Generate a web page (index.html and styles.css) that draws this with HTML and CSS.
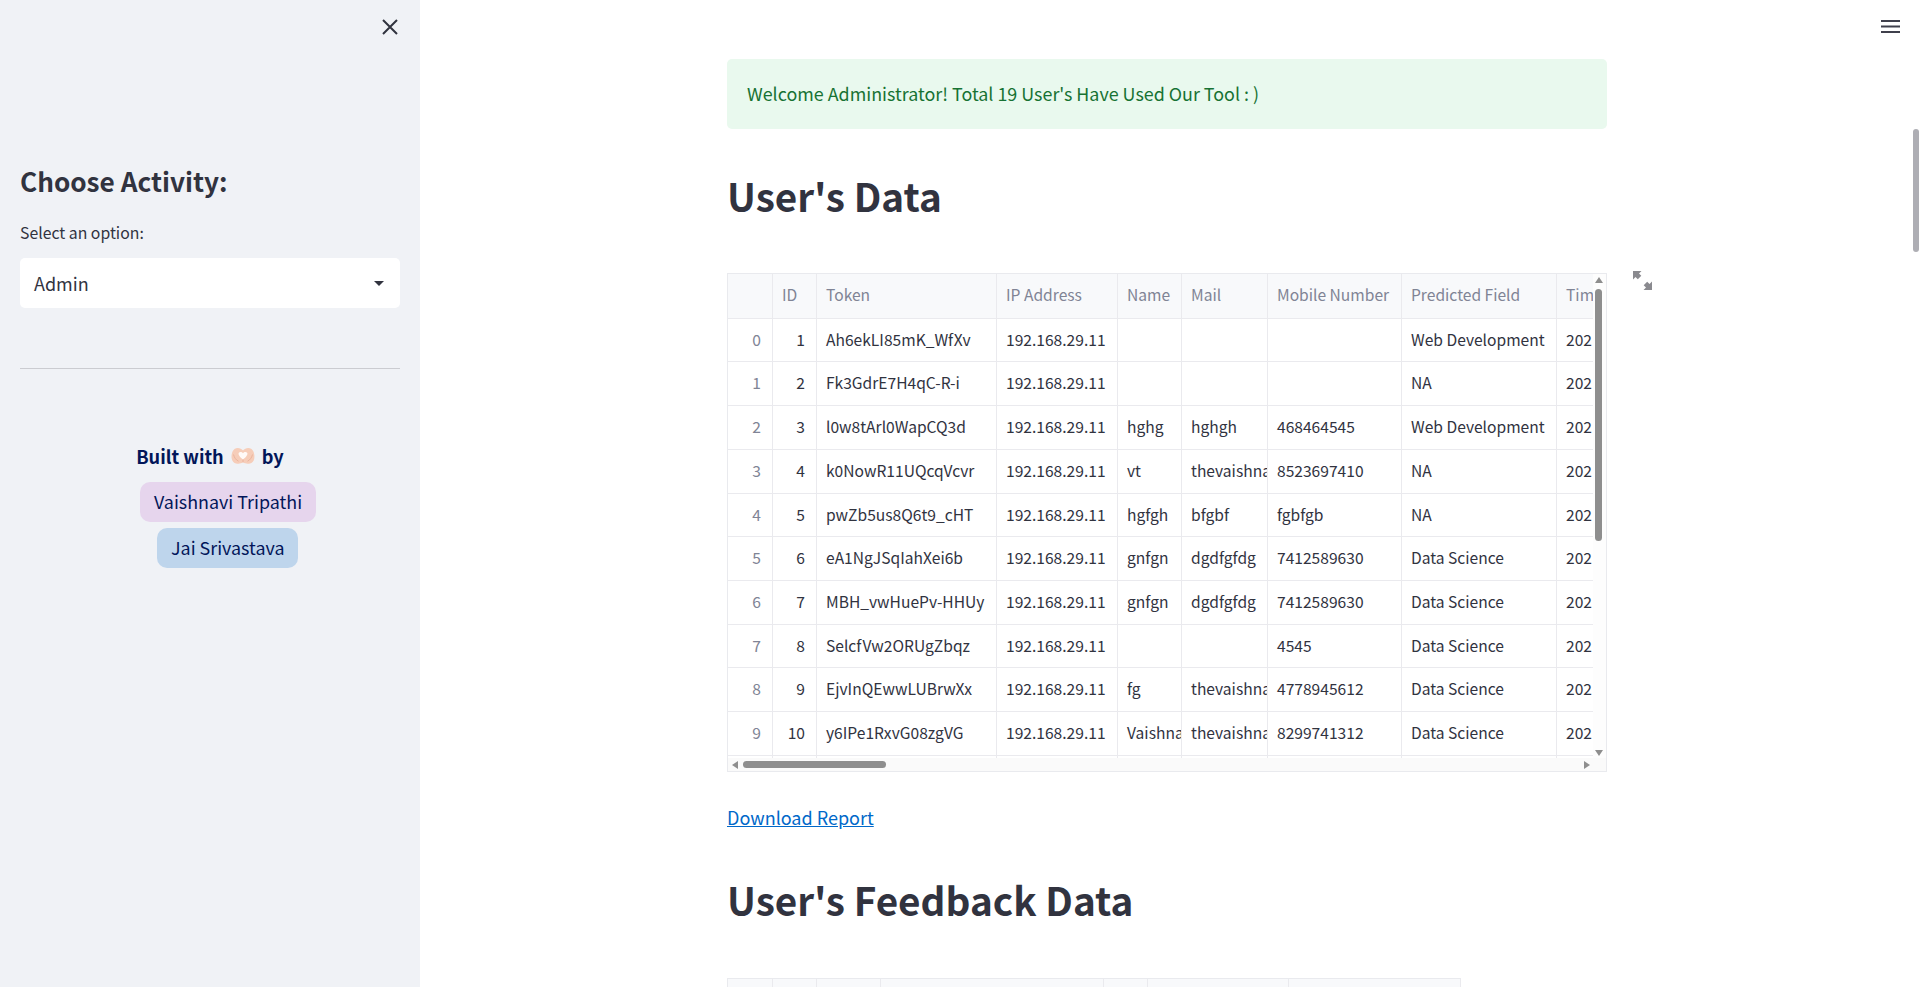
FILE: index.html
```html
<!DOCTYPE html>
<html lang="en">
<head>
  <meta charset="UTF-8">
  <title>Admin - User's Data</title>
  <link rel="stylesheet" href="styles.css">
</head>
<body>
  <div class="app">
    <aside class="sidebar">
      <button class="close-btn" type="button" aria-label="Close sidebar">
        <svg width="16" height="16" viewBox="0 0 16 16"><path d="M1 1l14 14M15 1L1 15" stroke="#31333f" stroke-width="2" fill="none"/></svg>
      </button>
      <h3 class="side-title">Choose Activity:</h3>
      <label class="side-label">Select an option:</label>
      <div class="select-box">
        <span>Admin</span>
        <span class="caret"></span>
      </div>
      <hr class="side-rule">
      <div class="credits">
        <p class="built">Built with
          <svg class="heart-hands" width="24" height="18" viewBox="0 0 24 18">
            <path d="M12 3.500C10 .8 6 .2 3.500 2 .8 4.200 .1 9 .8 12c.6 2.500 2.200 4 4.200 4.500 2.500.5 5 .3 7-1.200 2 1.500 4.500 1.700 7 1.200 2-.5 3.600-2 4.200-4.500.7-3 0-7.800-2.700-10C18 .2 14 .8 12 3.500z" fill="#f6cdb9"/>
            <path d="M12 6.300C13 4.700 15.400 4.500 16.300 6 17.200 7.800 14.300 10.700 12 12.500 9.700 10.700 6.800 7.800 7.700 6 8.600 4.500 11 4.700 12 6.300z" fill="#fffaf8"/>
            <path d="M12 12.500V15.300M2.500 7.500c.8 3.300 2.500 5.500 5 6.700M21.500 7.500c-.8 3.300-2.500 5.500-5 6.700" stroke="#e5a88f" stroke-width=".7" fill="none"/>
          </svg>
          by</p>
        <a class="pill pill-purple">Vaishnavi Tripathi</a>
        <a class="pill pill-blue">Jai Srivastava</a>
      </div>
    </aside>

    <main class="main">
      <button class="menu-btn" type="button" aria-label="Menu">
        <svg width="19" height="13" viewBox="0 0 19 13"><path d="M0 1h19M0 6.500h19M0 12h19" stroke="#3f404c" stroke-width="2" fill="none"/></svg>
      </button>
      <div class="page-thumb"></div>

      <div class="content">
        <div class="alert">Welcome Administrator! Total 19 User's Have Used Our Tool : )</div>

        <h1>User's Data</h1>
        <div class="frame frame-users">
          <div class="viewport">
            <table class="grid users">
              <thead>
                <tr><th></th><th>ID</th><th>Token</th><th>IP Address</th><th>Name</th><th>Mail</th><th>Mobile Number</th><th>Predicted Field</th><th>Timestamp</th></tr>
              </thead>
              <tbody>
                <tr><td class="idx">0</td><td class="num">1</td><td>Ah6ekLI85mK_WfXv</td><td>192.168.29.11</td><td></td><td></td><td></td><td>Web Development</td><td>202</td></tr>
                <tr><td class="idx">1</td><td class="num">2</td><td>Fk3GdrE7H4qC-R-i</td><td>192.168.29.11</td><td></td><td></td><td></td><td>NA</td><td>202</td></tr>
                <tr><td class="idx">2</td><td class="num">3</td><td>l0w8tArl0WapCQ3d</td><td>192.168.29.11</td><td>hghg</td><td>hghgh</td><td>468464545</td><td>Web Development</td><td>202</td></tr>
                <tr><td class="idx">3</td><td class="num">4</td><td>k0NowR11UQcqVcvr</td><td>192.168.29.11</td><td>vt</td><td>thevaishnavi</td><td>8523697410</td><td>NA</td><td>202</td></tr>
                <tr><td class="idx">4</td><td class="num">5</td><td>pwZb5us8Q6t9_cHT</td><td>192.168.29.11</td><td>hgfgh</td><td>bfgbf</td><td>fgbfgb</td><td>NA</td><td>202</td></tr>
                <tr><td class="idx">5</td><td class="num">6</td><td>eA1NgJSqIahXei6b</td><td>192.168.29.11</td><td>gnfgn</td><td>dgdfgfdg</td><td>7412589630</td><td>Data Science</td><td>202</td></tr>
                <tr><td class="idx">6</td><td class="num">7</td><td>MBH_vwHuePv-HHUy</td><td>192.168.29.11</td><td>gnfgn</td><td>dgdfgfdg</td><td>7412589630</td><td>Data Science</td><td>202</td></tr>
                <tr><td class="idx">7</td><td class="num">8</td><td>SelcfVw2ORUgZbqz</td><td>192.168.29.11</td><td></td><td></td><td>4545</td><td>Data Science</td><td>202</td></tr>
                <tr><td class="idx">8</td><td class="num">9</td><td>EjvInQEwwLUBrwXx</td><td>192.168.29.11</td><td>fg</td><td>thevaishnavi</td><td>4778945612</td><td>Data Science</td><td>202</td></tr>
                <tr><td class="idx">9</td><td class="num">10</td><td>y6IPe1RxvG08zgVG</td><td>192.168.29.11</td><td>Vaishnavi</td><td>thevaishnavi</td><td>8299741312</td><td>Data Science</td><td>202</td></tr>
                <tr><td></td><td></td><td></td><td></td><td></td><td></td><td></td><td></td><td></td></tr>
              </tbody>
            </table>
          </div>
          <!-- scrollbars -->
          <div class="vbar">
            <span class="arrow arrow-up"></span>
            <span class="vthumb"></span>
            <span class="arrow arrow-down"></span>
          </div>
          <div class="hbar">
            <span class="arrow arrow-left"></span>
            <span class="hthumb"></span>
            <span class="arrow arrow-right"></span>
          </div>
          <button class="expand-btn" type="button" aria-label="View fullscreen">
            <svg width="19" height="19" viewBox="0 0 19 19" fill="#8a8a8f">
              <path d="M0 0h8.500L6 2.500 8.300 4.800 4.800 8.300 2.500 6 0 8.500z"/>
              <path d="M19 19h-8.500l2.500-2.500-2.300-2.300 3.500-3.500 2.300 2.300 2.500-2.500z"/>
            </svg>
          </button>
        </div>

        <a class="report-link" href="#">Download Report</a>

        <h1>User's Feedback Data</h1>
        <div class="frame frame-feedback">
          <table class="grid feedback">
            <thead>
              <tr><th></th><th></th><th></th><th></th><th></th><th></th><th></th></tr>
            </thead>
          </table>
        </div>
      </div>
    </main>
  </div>
</body>
</html>
```

FILE: styles.css
```css
* { box-sizing: border-box; }
html, body { margin: 0; height: 100%; overflow: hidden; }
body { font-family: "Noto Sans CJK SC", "Noto Sans", sans-serif; color: #31333f; background: #fff; }
button { background: none; border: none; padding: 0; cursor: pointer; }

.app { display: flex; height: 100vh; }

/* sidebar */
.sidebar { position: relative; flex: 0 0 420px; background: #f0f2f6; padding: 164px 20px 0; }
.close-btn { position: absolute; top: 19px; left: 382px; width: 16px; height: 16px; }
.close-btn svg { display: block; }
.side-title { margin: 0; font-size: 26.200px; line-height: 34px; font-weight: 600; }
.side-label { display: block; margin-top: 23px; font-size: 15.800px; line-height: 24px; }
.select-box { display: flex; align-items: center; justify-content: space-between; height: 50px; margin-top: 13px; padding: 0 16px 0 14px; background: #fff; border-radius: 5px; font-size: 18px; }
.caret { width: 0; height: 0; border-left: 5.500px solid transparent; border-right: 5.500px solid transparent; border-top: 5px solid #31333f; }
.side-rule { margin: 60px 0 0; border: none; border-top: 1px solid #cbccd1; }
.credits { margin-top: 72px; text-align: center; color: #021659; }
.built { display: flex; justify-content: center; align-items: center; gap: 7px; margin: 0; font-size: 18.200px; line-height: 30px; font-weight: 600; }
.pill { display: block; width: fit-content; height: 40px; line-height: 39px; margin: 11px 0 0 120px; padding: 0 14px; border-radius: 10px; font-size: 17.900px; }
.pill + .pill { margin: 6px 0 0 137px; }
.pill-purple { background: #e6d5ed; }
.pill-blue { background: #bed5ec; }

/* main area */
.main { position: relative; flex: 1; padding: 59px 0 0 307px; overflow: hidden; }
.menu-btn { position: absolute; top: 20px; right: 19px; width: 19px; height: 13px; }
.menu-btn svg { display: block; }
.page-thumb { position: absolute; top: 129px; right: 0; width: 6px; height: 123px; background: #aeaeb4; border-radius: 3px; }
.content { width: 880px; }
.alert { height: 70px; padding: 0 20px; background: #e9f9ee; color: #177233; border-radius: 5px; font-size: 17.900px; line-height: 69px; }
h1 { margin: 0; font-size: 38.700px; line-height: 60px; font-weight: 600; }
.alert + h1 { margin-top: 36px; margin-bottom: 48px; }
.report-link + h1 { margin-top: 38px; margin-bottom: 49px; }

/* dataframes */
.frame { position: relative; border: 1px solid #e9eaee; background: #fff; }
.frame-users { height: 499px; }
.frame-feedback { width: 734px; }
.viewport { width: 865px; height: 484px; overflow: hidden; }
.grid { display: block; border-collapse: collapse; font-size: 15.600px; }
.grid thead, .grid tbody { display: block; }
.grid tr { display: grid; height: 43.700px; border-bottom: 1px solid #eaeaee; }
.grid thead tr { height: 44.800px; background: #f8f9fb; }
.users tr { grid-template-columns: 45px 44px 180px 121px 64px 86px 134px 155px 100px; }
.feedback tr { grid-template-columns: 45px 44px 64px 223px 44px 141px 172px; }
.grid th, .grid td { padding: 0 9px; font-weight: 400; text-align: left; white-space: nowrap; overflow: hidden; border-right: 1px solid #eaeaee; line-height: 40px; }
.grid th { color: #808495; line-height: 41px; }
.grid .idx, .grid .num { text-align: right; padding-right: 11px; }
.grid .idx { color: #808495; }
.users th:last-child, .users td:last-child { border-right: none; }

/* fake scrollbars */
.vbar { position: absolute; top: 0; right: 0; bottom: 13px; width: 13px; background: #fdfdfd; }
.vthumb { position: absolute; top: 15px; left: 2px; width: 7px; height: 252px; background: #8e8e8e; border-radius: 4px; }
.hbar { position: absolute; left: 0; right: 0; bottom: 0; height: 13px; background: #fafafa; }
.hthumb { position: absolute; top: 3px; left: 15px; width: 143px; height: 7px; background: #8e8e8e; border-radius: 4px; }
.arrow { position: absolute; width: 0; height: 0; border: 4px solid transparent; }
.arrow-up { top: 3px; left: 2px; border-bottom: 6px solid #8e8e8e; border-top: none; }
.arrow-down { bottom: 2px; left: 2px; border-top: 6px solid #8e8e8e; border-bottom: none; }
.arrow-left { top: 3px; left: 4px; border-right: 6px solid #8e8e8e; border-left: none; }
.arrow-right { top: 3px; right: 16px; border-left: 6px solid #8e8e8e; border-right: none; }
.expand-btn { position: absolute; top: -3px; left: 905px; width: 19px; height: 19px; }
.expand-btn svg { display: block; }

.report-link { display: block; margin-top: 31px; font-size: 18px; line-height: 28px; color: #0068c9; text-decoration: underline; }
```
